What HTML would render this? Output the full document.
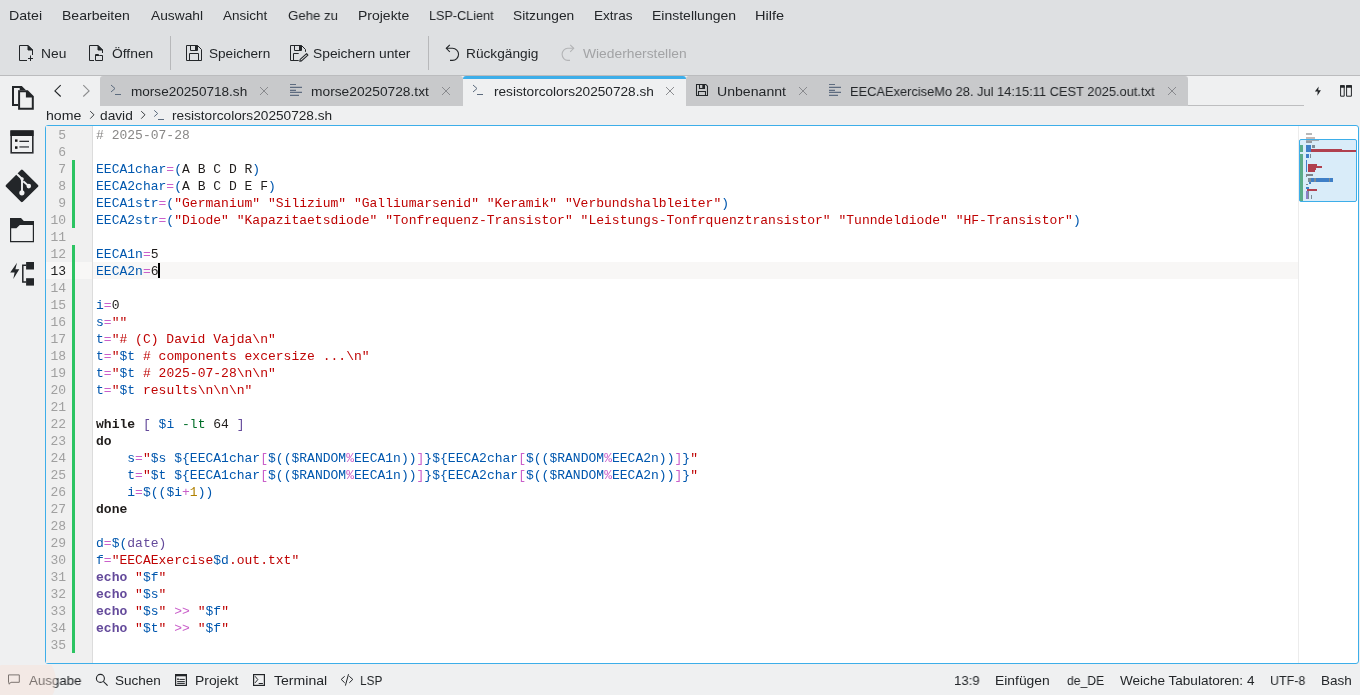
<!DOCTYPE html>
<html><head><meta charset="utf-8"><style>
html,body{margin:0;padding:0;}
body{width:1360px;height:695px;overflow:hidden;background:#eff0f1;position:relative;}
#root{position:absolute;left:0;top:0;width:1360px;height:695px;overflow:hidden;}
.abs{position:absolute;}
.t{will-change:transform;position:absolute;white-space:pre;font-family:"Liberation Sans",sans-serif;font-size:13.5px;line-height:20px;transform-origin:0 0;}
#header{position:absolute;left:0;top:0;width:1360px;height:75px;background:#dee0e2;}
#hline{position:absolute;left:0;top:75px;width:1360px;height:1px;background:#bbbcbe;}
.tsep{position:absolute;top:36px;width:1px;height:34px;background:#b7b8ba;}
.tab{position:absolute;top:76px;height:30px;background:#c8c9cb;border-radius:3px 3px 0 0;}
.atab{position:absolute;top:76px;height:30px;background:#eff0f1;}
.atabline{position:absolute;top:76px;height:3px;background:#3daee9;border-radius:3px 3px 0 0;}
#frame{position:absolute;left:45px;top:125px;width:1312px;height:537px;border:1px solid #3daee9;border-radius:3px;background:#fff;overflow:hidden;}
#gutter{position:absolute;left:46px;top:126px;width:46px;height:537px;background:#f0f0f0;}
#gsep{position:absolute;left:92px;top:126px;width:1px;height:537px;background:#dcdcdc;}
#msep{position:absolute;left:1298px;top:126px;width:1px;height:537px;background:#ececec;}
.curline{position:absolute;left:93px;width:1205px;height:17px;background:#f8f7f6;}
.curgut{position:absolute;left:46px;width:46px;height:17px;background:#f8f7f6;}
.ln{will-change:transform;position:absolute;left:46px;width:20px;padding-top:1px;text-align:right;font-family:"Liberation Mono",monospace;font-size:13px;line-height:17px;height:17px;color:#a0a0a0;}
.ln.cur{color:#1e1e1e;}
.cl{will-change:transform;letter-spacing:0.0136px;position:absolute;left:96px;padding-top:1px;white-space:pre;font-family:"Liberation Mono",monospace;font-size:13px;line-height:17px;height:17px;color:#1f1c1b;}
.gbar{position:absolute;left:72px;width:3px;background:#2cc462;}
.cursor{position:absolute;left:158px;top:263px;width:2px;height:15px;background:#000;}
svg{position:absolute;overflow:visible;}

</style></head><body>
<div id="root">
<div id="header"></div>
<div id="hline"></div>
<div class="tsep" style="left:170px"></div>
<div class="tsep" style="left:428px"></div>
<!-- toolbar icons -->
<svg style="left:18px;top:45px" width="16" height="16" viewBox="0 0 16 16" fill="none" stroke="#232629" stroke-width="1">
 <path d="M9 15.5H1.5V0.5H10L14.5 5V10"/><path d="M10 0.5V5H14.5Z" fill="#232629"/>
 <path d="M12.5 10.5V16M10 13.5H15"/>
</svg>
<svg style="left:88px;top:45px" width="16" height="16" viewBox="0 0 16 16" fill="none" stroke="#232629" stroke-width="1">
 <path d="M6 15.5H1.5V0.5H10L14.5 5V8"/><path d="M10 0.5V5H14.5Z" fill="#232629"/>
 <path d="M7.5 15.5V9.5H10.5L11.5 10.5H14.5V15.5Z"/><path d="M7.5 10.5H11" />
</svg>
<svg style="left:186px;top:45px" width="16" height="16" viewBox="0 0 16 16" fill="none" stroke="#232629" stroke-width="1">
 <path d="M0.5 0.5H11.5L15.5 4.5V15.5H0.5Z"/><path d="M4.5 0.5V5.5H11.5V0.5"/><rect x="9" y="1" width="2" height="4" fill="#232629" stroke="none"/>
 <path d="M3.5 15.5V8.5H12.5V15.5"/>
</svg>
<svg style="left:290px;top:45px" width="19" height="17" viewBox="0 0 19 17" fill="none" stroke="#232629" stroke-width="1">
 <path d="M8.7 15.5H0.5V0.5H11.5L15.5 4.5V6.8"/><path d="M4.5 0.5V5.5H11.5V0.5"/><rect x="9" y="1" width="2" height="4" fill="#232629" stroke="none"/>
 <path d="M3.5 15.5V8.5H8.7"/>
 <path d="M10.2 14.4L16.6 8.7L17.9 10.2L11.5 15.9L9.8 16.3Z" stroke-width="1.1" stroke-linejoin="round"/>
</svg>
<svg style="left:445px;top:45px" width="16" height="16" viewBox="0 0 16 16" fill="none" stroke="#232629" stroke-width="1.1">
 <path d="M4.8 -0.2L1.3 3.3L4.8 6.8"/><path d="M1.3 3.3H7.5A6.05 6.05 0 0 1 7.5 15.4H5"/>
</svg>
<svg style="left:560px;top:45px" width="16" height="16" viewBox="0 0 16 16" fill="none" stroke="#b3b4b6" stroke-width="1.1">
 <path d="M10.2 -0.2L13.7 3.3L10.2 6.8"/><path d="M13.7 3.3H7.8A5.7 6.05 0 0 0 7.8 15.4H10"/>
</svg>
<!-- tab bar -->
<svg style="left:50px;top:84px" width="16" height="16" viewBox="0 0 16 16" fill="none" stroke="#232629" stroke-width="1.1"><path d="M10.7 1.2L4.9 6.9L10.7 12.5"/></svg>
<svg style="left:78px;top:84px" width="16" height="16" viewBox="0 0 16 16" fill="none" stroke="#8b8c8e" stroke-width="1.1"><path d="M5.3 1.2L11.1 6.9L5.3 12.5"/></svg>
<div class="tab" style="left:100px;width:363px"></div>
<div class="atab" style="left:463px;width:223px"></div>
<div class="atabline" style="left:463px;width:223px"></div>
<div class="tab" style="left:686px;width:502px"></div>
<div class="abs" style="left:1188px;top:105px;width:116px;height:1px;background:#bdbec0"></div>
<!-- tab icons -->
<svg style="left:110px;top:84px" width="12" height="12" viewBox="0 0 12 12" fill="none" stroke="#5b6a7d" stroke-width="1"><path d="M1 1L5 4.5L1 8M5 10.5H11"/></svg>
<svg style="left:256px;top:83px" width="16" height="16" viewBox="0 0 16 16" fill="none" stroke="#86878a" stroke-width="0.95"><path d="M4 4L12 12M12 4L4 12"/></svg>
<svg style="left:289px;top:83px" width="14" height="14" viewBox="0 0 14 14" fill="none" stroke="#5e6c80" stroke-width="1.1"><path d="M1 1.5H7M1 4.4H13M1 7.35H7M1 9.4H13M1 12.4H10"/></svg>
<svg style="left:438px;top:83px" width="16" height="16" viewBox="0 0 16 16" fill="none" stroke="#86878a" stroke-width="0.95"><path d="M4 4L12 12M12 4L4 12"/></svg>
<svg style="left:472px;top:84px" width="12" height="12" viewBox="0 0 12 12" fill="none" stroke="#5b6a7d" stroke-width="1"><path d="M1 1L5 4.5L1 8M5 10.5H11"/></svg>
<svg style="left:662px;top:83px" width="16" height="16" viewBox="0 0 16 16" fill="none" stroke="#86878a" stroke-width="0.95"><path d="M4 4L12 12M12 4L4 12"/></svg>
<svg style="left:696px;top:84px" width="12" height="12" viewBox="0 0 12 12" fill="none" stroke="#232629" stroke-width="1.05">
 <path d="M0.5 0.5H9.8L11.5 2.2V11.5H0.5Z"/><path d="M3.5 0.5V4.5H8.5V0.5"/><rect x="6.3" y="0.5" width="2.2" height="4" fill="#232629" stroke="none"/><path d="M2.5 11.5V7.5H9.5V11.5"/>
</svg>
<svg style="left:795px;top:83px" width="16" height="16" viewBox="0 0 16 16" fill="none" stroke="#86878a" stroke-width="0.95"><path d="M4 4L12 12M12 4L4 12"/></svg>
<svg style="left:828px;top:83px" width="14" height="14" viewBox="0 0 14 14" fill="none" stroke="#5e6c80" stroke-width="1.1"><path d="M1 1.5H7M1 4.4H13M1 7.35H7M1 9.4H13M1 12.4H10"/></svg>
<svg style="left:1164px;top:83px" width="16" height="16" viewBox="0 0 16 16" fill="none" stroke="#86878a" stroke-width="0.95"><path d="M4 4L12 12M12 4L4 12"/></svg>
<svg style="left:1312px;top:85px" width="12" height="12" viewBox="0 0 12 12"><path d="M6.7 1.4L2.9 6.5H5.7L5.3 10.7L8.9 5.3H6.2Z" fill="#232629"/></svg>
<svg style="left:1338px;top:84px" width="16" height="14" viewBox="0 0 16 14" fill="none" stroke="#232629" stroke-width="1"><path d="M2.6 1.7H6.2V12.2H2.6ZM8.6 1.7H13.4V12.2H8.6Z"/><path d="M2.1 1.2h4.6v2.5H2.1zM8.1 1.2h5.8v2.5H8.1z" fill="#232629" stroke="none"/></svg>
<!-- breadcrumb -->
<svg style="left:86px;top:109px" width="10" height="14" viewBox="0 0 10 14" fill="none" stroke="#34373a" stroke-width="0.95"><path d="M4.2 2.2L8 5.75L4.2 9.7"/></svg>
<svg style="left:137px;top:109px" width="10" height="14" viewBox="0 0 10 14" fill="none" stroke="#34373a" stroke-width="0.95"><path d="M4.2 2.2L8 5.75L4.2 9.7"/></svg>
<svg style="left:153px;top:108px" width="12" height="14" viewBox="0 0 12 14" fill="none" stroke="#5b6a7d" stroke-width="1"><path d="M1.2 2.3L4.7 5.5L1.2 8.6M5 11.5H11"/></svg>
<!-- editor frame -->
<div id="frame"></div>
<div id="gutter"></div>
<div id="gsep"></div>
<div id="msep"></div>
<!-- sidebar icons -->
<svg style="left:12px;top:86px" width="24" height="26" viewBox="0 0 24 26">
 <path d="M0 0H9.8L14 4.3H6.1V20H0Z" fill="#232629"/>
 <path d="M2 2H7.7V4.3H6.1V18H2Z" fill="#eff0f1"/>
 <path d="M6.1 4.3H15.8L21.8 10.3V23.8H6.1Z" fill="#232629"/>
 <path d="M8.1 6.3H13.9V11.6H19.8V21.8H8.1Z" fill="#eff0f1"/>
</svg>
<svg style="left:10px;top:130px" width="24" height="24" viewBox="0 0 24 24">
 <rect x="0.4" y="0.4" width="23.2" height="23.2" fill="#2b2d30"/>
 <rect x="0.4" y="0.4" width="23.2" height="5.6" fill="#1f2124"/>
 <rect x="2" y="6" width="20" height="16" fill="#eff0f1"/>
 <rect x="5" y="9.4" width="2.5" height="2.4" fill="#111"/><rect x="9.4" y="10.7" width="9.6" height="1.3" fill="#2b2d30"/>
 <rect x="5" y="16.3" width="2.5" height="2.5" fill="#111"/><rect x="9.4" y="16.3" width="9.6" height="1.3" fill="#3b3d40"/>
</svg>
<svg style="left:2px;top:166px" width="40" height="40" viewBox="0 0 40 40">
 <path d="M4.9 19.9L19.9 4.9L35.1 19.9L19.9 34.8Z" fill="#232629" stroke="#232629" stroke-width="2.6" stroke-linejoin="round"/>
 <path d="M14.6 7.8L20.1 13M20 13V26.8M21.2 15.2L26.8 20.1" stroke="#eff0f1" stroke-width="1.9" fill="none"/>
 <circle cx="20.1" cy="13" r="1.7" fill="#eff0f1"/><circle cx="26.8" cy="20.1" r="2.3" fill="#eff0f1"/><circle cx="19.9" cy="26.8" r="2.6" fill="#eff0f1"/>
</svg>
<svg style="left:10px;top:217.75px" width="24" height="25" viewBox="0 0 24 25">
 <path d="M0 0H11L13.8 2.9H24V24.2H0Z" fill="#232629"/>
 <path d="M1.2 10.35H6.4L9.8 7H22.8V23H1.2Z" fill="#eff0f1"/>
</svg>
<svg style="left:9px;top:262px" width="26" height="26" viewBox="0 0 26 26">
 <path d="M8 0.8L1.2 10.6H5.6L4.3 17L10.3 7.2H6.4Z" fill="#232629"/>
 <rect x="17.1" y="0" width="7.9" height="7.5" fill="#232629"/>
 <rect x="17.1" y="16.2" width="7.9" height="7.4" fill="#232629"/>
 <path d="M17.1 3.2H13.8V20H17.1" stroke="#232629" stroke-width="1.5" fill="none"/>
</svg>
<!-- status bar -->
<svg style="left:7px;top:674px" width="14" height="14" viewBox="0 0 14 14" fill="none" stroke="#232629" stroke-width="1"><path d="M1.5 0.9H12.3V8.3H4L2 10.2V8.3H1.5Z"/></svg>
<svg style="left:95px;top:673px" width="14" height="14" viewBox="0 0 14 14" fill="none" stroke="#232629" stroke-width="1.1"><circle cx="5.4" cy="5.4" r="4"/><path d="M8.3 8.3L12.6 12.6"/></svg>
<svg style="left:175px;top:674px" width="12" height="12" viewBox="0 0 12 12" fill="none" stroke="#232629"><rect x="0.6" y="0.6" width="10.8" height="10.8" stroke-width="1.2"/><rect x="0" y="0" width="12" height="2.3" fill="#232629" stroke="none"/><rect x="2.2" y="4.4" width="1.6" height="1.6" fill="#232629" stroke="none"/><path d="M4.4 5.4H9.8M2.2 7.6H9.8M2.2 9.4H9.8" stroke-width="1"/></svg>
<svg style="left:253px;top:674px" width="12" height="12" viewBox="0 0 12 12" fill="none" stroke="#232629"><rect x="0.6" y="0.6" width="10.8" height="10.8" stroke-width="1.2"/><path d="M2 2.2L4.8 5.6L2 8.9M5.7 9.5H9.9" stroke-width="1"/></svg>
<svg style="left:340px;top:673px" width="14" height="14" viewBox="0 0 14 14" fill="none" stroke="#232629" stroke-width="1"><path d="M4.7 3.3L1.2 6.4L4.7 9.8M9.3 3.3L12.8 6.4L9.3 9.8M8.5 1.2L5.4 12.6"/></svg>

<div class="curline" style="top:262px"></div>
<div class="curgut" style="top:262px"></div>
<div class="gbar" style="top:160px;height:68px"></div>
<div class="gbar" style="top:245px;height:408px"></div>
<div class="abs" style="left:1299px;top:139px;width:56px;height:61px;border:1px solid #3daee9;border-radius:2px;background:#d9ecf9"></div>
<div class="abs" style="left:1300px;top:145px;width:3px;height:7px;background:#5aab88"></div>
<div class="abs" style="left:1300px;top:154px;width:3px;height:47px;background:#5aab88"></div>
<div class="abs" style="left:1306.1px;top:133.2px;width:5.70px;height:1.60px;background:#b8b8b8"></div>
<div class="abs" style="left:1306.1px;top:137.1px;width:8.80px;height:1.50px;background:#c6bab6"></div>
<div class="abs" style="left:1306.1px;top:139.6px;width:12.60px;height:1.20px;background:#a4aab0"></div>
<div class="abs" style="left:1306.1px;top:141.0px;width:5.70px;height:1.70px;background:#939aa0"></div>
<div class="abs" style="left:1306.1px;top:145.1px;width:4.70px;height:6.50px;background:#3f7fc7"></div>
<div class="abs" style="left:1312.1px;top:145.1px;width:2.90px;height:3.30px;background:#7e8c96"></div>
<div class="abs" style="left:1310.8px;top:149.0px;width:31.20px;height:1.40px;background:#b0404f"></div>
<div class="abs" style="left:1310.8px;top:150.2px;width:45.10px;height:1.70px;background:#b0404f"></div>
<div class="abs" style="left:1306.1px;top:154.2px;width:3.40px;height:3.70px;background:#3f7fc7"></div>
<div class="abs" style="left:1309.5px;top:154.2px;width:0.70px;height:3.70px;background:#7e8c96"></div>
<div class="abs" style="left:1306.0px;top:160.0px;width:1.00px;height:11.70px;background:#3f7fc7"></div>
<div class="abs" style="left:1308.0px;top:164.2px;width:8.70px;height:3.80px;background:#b0404f"></div>
<div class="abs" style="left:1308.0px;top:168.0px;width:7.80px;height:2.00px;background:#b0404f"></div>
<div class="abs" style="left:1308.0px;top:170.0px;width:6.80px;height:1.70px;background:#b0404f"></div>
<div class="abs" style="left:1316.7px;top:166.2px;width:5.20px;height:1.60px;background:#b0404f"></div>
<div class="abs" style="left:1306.0px;top:174.2px;width:6.80px;height:1.70px;background:#7d858b"></div>
<div class="abs" style="left:1306.0px;top:175.9px;width:1.00px;height:1.60px;background:#7d858b"></div>
<div class="abs" style="left:1308.3px;top:178.1px;width:2.60px;height:3.60px;background:#7e8c96"></div>
<div class="abs" style="left:1310.9px;top:178.1px;width:22.00px;height:3.60px;background:#3f7fc7"></div>
<div class="abs" style="left:1314.1px;top:178.1px;width:1.70px;height:3.60px;background:#7e8c96"></div>
<div class="abs" style="left:1329.0px;top:178.1px;width:1.00px;height:3.60px;background:#7e8c96"></div>
<div class="abs" style="left:1308.6px;top:182.0px;width:2.00px;height:1.60px;background:#3f7fc7"></div>
<div class="abs" style="left:1306.0px;top:184.0px;width:2.00px;height:1.00px;background:#7d858b"></div>
<div class="abs" style="left:1306.0px;top:187.2px;width:3.00px;height:1.90px;background:#3f7fc7"></div>
<div class="abs" style="left:1307.0px;top:189.1px;width:10.00px;height:1.90px;background:#b0404f"></div>
<div class="abs" style="left:1306.0px;top:191.0px;width:2.00px;height:7.90px;background:#8a80c8"></div>
<div class="abs" style="left:1308.0px;top:191.0px;width:1.00px;height:7.90px;background:#7e8c96"></div>
<div class="abs" style="left:1310.9px;top:195.0px;width:1.00px;height:3.90px;background:#7e8c96"></div>
<div class="ln" style="top:126px">5</div>
<div class="cl" style="top:126px"><span style="color:#898887"># 2025-07-28</span></div>
<div class="ln" style="top:143px">6</div>
<div class="cl" style="top:143px"></div>
<div class="ln" style="top:160px">7</div>
<div class="cl" style="top:160px"><span style="color:#0057ae">EECA1char</span><span style="color:#ca60ca">=</span><span style="color:#0057ae">(</span><span style="color:#1f1c1b">A B C D R</span><span style="color:#0057ae">)</span></div>
<div class="ln" style="top:177px">8</div>
<div class="cl" style="top:177px"><span style="color:#0057ae">EECA2char</span><span style="color:#ca60ca">=</span><span style="color:#0057ae">(</span><span style="color:#1f1c1b">A B C D E F</span><span style="color:#0057ae">)</span></div>
<div class="ln" style="top:194px">9</div>
<div class="cl" style="top:194px"><span style="color:#0057ae">EECA1str</span><span style="color:#ca60ca">=</span><span style="color:#0057ae">(</span><span style="color:#bf0303">&quot;Germanium&quot; &quot;Silizium&quot; &quot;Galliumarsenid&quot; &quot;Keramik&quot; &quot;Verbundshalbleiter&quot;</span><span style="color:#0057ae">)</span></div>
<div class="ln" style="top:211px">10</div>
<div class="cl" style="top:211px"><span style="color:#0057ae">EECA2str</span><span style="color:#ca60ca">=</span><span style="color:#0057ae">(</span><span style="color:#bf0303">&quot;Diode&quot; &quot;Kapazitaetsdiode&quot; &quot;Tonfrequenz-Transistor&quot; &quot;Leistungs-Tonfrquenztransistor&quot; &quot;Tunndeldiode&quot; &quot;HF-Transistor&quot;</span><span style="color:#0057ae">)</span></div>
<div class="ln" style="top:228px">11</div>
<div class="cl" style="top:228px"></div>
<div class="ln" style="top:245px">12</div>
<div class="cl" style="top:245px"><span style="color:#0057ae">EECA1n</span><span style="color:#ca60ca">=</span><span style="color:#1f1c1b">5</span></div>
<div class="ln cur" style="top:262px">13</div>
<div class="cl" style="top:262px"><span style="color:#0057ae">EECA2n</span><span style="color:#ca60ca">=</span><span style="color:#1f1c1b">6</span></div>
<div class="ln" style="top:279px">14</div>
<div class="cl" style="top:279px"></div>
<div class="ln" style="top:296px">15</div>
<div class="cl" style="top:296px"><span style="color:#0057ae">i</span><span style="color:#ca60ca">=</span><span style="color:#1f1c1b">0</span></div>
<div class="ln" style="top:313px">16</div>
<div class="cl" style="top:313px"><span style="color:#0057ae">s</span><span style="color:#ca60ca">=</span><span style="color:#bf0303">&quot;&quot;</span></div>
<div class="ln" style="top:330px">17</div>
<div class="cl" style="top:330px"><span style="color:#0057ae">t</span><span style="color:#ca60ca">=</span><span style="color:#bf0303">&quot;# (C) David Vajda\n&quot;</span></div>
<div class="ln" style="top:347px">18</div>
<div class="cl" style="top:347px"><span style="color:#0057ae">t</span><span style="color:#ca60ca">=</span><span style="color:#bf0303">&quot;</span><span style="color:#0057ae">$t</span><span style="color:#bf0303"> # components excersize ...\n&quot;</span></div>
<div class="ln" style="top:364px">19</div>
<div class="cl" style="top:364px"><span style="color:#0057ae">t</span><span style="color:#ca60ca">=</span><span style="color:#bf0303">&quot;</span><span style="color:#0057ae">$t</span><span style="color:#bf0303"> # 2025-07-28\n\n&quot;</span></div>
<div class="ln" style="top:381px">20</div>
<div class="cl" style="top:381px"><span style="color:#0057ae">t</span><span style="color:#ca60ca">=</span><span style="color:#bf0303">&quot;</span><span style="color:#0057ae">$t</span><span style="color:#bf0303"> results\n\n\n&quot;</span></div>
<div class="ln" style="top:398px">21</div>
<div class="cl" style="top:398px"></div>
<div class="ln" style="top:415px">22</div>
<div class="cl" style="top:415px"><span style="color:#1f1c1b;font-weight:bold">while</span><span style="color:#1f1c1b"> </span><span style="color:#644a9b">[</span><span style="color:#1f1c1b"> </span><span style="color:#0057ae">$i</span><span style="color:#1f1c1b"> </span><span style="color:#006e28">-lt</span><span style="color:#1f1c1b"> 64 </span><span style="color:#644a9b">]</span></div>
<div class="ln" style="top:432px">23</div>
<div class="cl" style="top:432px"><span style="color:#1f1c1b;font-weight:bold">do</span></div>
<div class="ln" style="top:449px">24</div>
<div class="cl" style="top:449px"><span style="color:#1f1c1b">    </span><span style="color:#0057ae">s</span><span style="color:#ca60ca">=</span><span style="color:#bf0303">&quot;</span><span style="color:#0057ae">$s</span><span style="color:#bf0303"> </span><span style="color:#0057ae">${EECA1char</span><span style="color:#ca60ca">[</span><span style="color:#0057ae">$(($RANDOM</span><span style="color:#ca60ca">%</span><span style="color:#0057ae">EECA1n))</span><span style="color:#ca60ca">]</span><span style="color:#0057ae">}</span><span style="color:#0057ae">${EECA2char</span><span style="color:#ca60ca">[</span><span style="color:#0057ae">$(($RANDOM</span><span style="color:#ca60ca">%</span><span style="color:#0057ae">EECA2n))</span><span style="color:#ca60ca">]</span><span style="color:#0057ae">}</span><span style="color:#bf0303">&quot;</span></div>
<div class="ln" style="top:466px">25</div>
<div class="cl" style="top:466px"><span style="color:#1f1c1b">    </span><span style="color:#0057ae">t</span><span style="color:#ca60ca">=</span><span style="color:#bf0303">&quot;</span><span style="color:#0057ae">$t</span><span style="color:#bf0303"> </span><span style="color:#0057ae">${EECA1char</span><span style="color:#ca60ca">[</span><span style="color:#0057ae">$(($RANDOM</span><span style="color:#ca60ca">%</span><span style="color:#0057ae">EECA1n))</span><span style="color:#ca60ca">]</span><span style="color:#0057ae">}</span><span style="color:#0057ae">${EECA2char</span><span style="color:#ca60ca">[</span><span style="color:#0057ae">$(($RANDOM</span><span style="color:#ca60ca">%</span><span style="color:#0057ae">EECA2n))</span><span style="color:#ca60ca">]</span><span style="color:#0057ae">}</span><span style="color:#bf0303">&quot;</span></div>
<div class="ln" style="top:483px">26</div>
<div class="cl" style="top:483px"><span style="color:#1f1c1b">    </span><span style="color:#0057ae">i</span><span style="color:#ca60ca">=</span><span style="color:#0057ae">$((</span><span style="color:#0057ae">$i</span><span style="color:#ca60ca">+</span><span style="color:#b08000">1</span><span style="color:#0057ae">))</span></div>
<div class="ln" style="top:500px">27</div>
<div class="cl" style="top:500px"><span style="color:#1f1c1b;font-weight:bold">done</span></div>
<div class="ln" style="top:517px">28</div>
<div class="cl" style="top:517px"></div>
<div class="ln" style="top:534px">29</div>
<div class="cl" style="top:534px"><span style="color:#0057ae">d</span><span style="color:#ca60ca">=</span><span style="color:#0057ae">$(</span><span style="color:#644a9b">date</span><span style="color:#644a9b">)</span></div>
<div class="ln" style="top:551px">30</div>
<div class="cl" style="top:551px"><span style="color:#0057ae">f</span><span style="color:#ca60ca">=</span><span style="color:#bf0303">&quot;EECAExercise</span><span style="color:#0057ae">$d</span><span style="color:#bf0303">.out.txt&quot;</span></div>
<div class="ln" style="top:568px">31</div>
<div class="cl" style="top:568px"><span style="color:#644a9b;font-weight:bold">echo</span><span style="color:#1f1c1b"> </span><span style="color:#bf0303">&quot;</span><span style="color:#0057ae">$f</span><span style="color:#bf0303">&quot;</span></div>
<div class="ln" style="top:585px">32</div>
<div class="cl" style="top:585px"><span style="color:#644a9b;font-weight:bold">echo</span><span style="color:#1f1c1b"> </span><span style="color:#bf0303">&quot;</span><span style="color:#0057ae">$s</span><span style="color:#bf0303">&quot;</span></div>
<div class="ln" style="top:602px">33</div>
<div class="cl" style="top:602px"><span style="color:#644a9b;font-weight:bold">echo</span><span style="color:#1f1c1b"> </span><span style="color:#bf0303">&quot;</span><span style="color:#0057ae">$s</span><span style="color:#bf0303">&quot;</span><span style="color:#1f1c1b"> </span><span style="color:#ca60ca">&gt;&gt;</span><span style="color:#1f1c1b"> </span><span style="color:#bf0303">&quot;</span><span style="color:#0057ae">$f</span><span style="color:#bf0303">&quot;</span></div>
<div class="ln" style="top:619px">34</div>
<div class="cl" style="top:619px"><span style="color:#644a9b;font-weight:bold">echo</span><span style="color:#1f1c1b"> </span><span style="color:#bf0303">&quot;</span><span style="color:#0057ae">$t</span><span style="color:#bf0303">&quot;</span><span style="color:#1f1c1b"> </span><span style="color:#ca60ca">&gt;&gt;</span><span style="color:#1f1c1b"> </span><span style="color:#bf0303">&quot;</span><span style="color:#0057ae">$f</span><span style="color:#bf0303">&quot;</span></div>
<div class="ln" style="top:636px">35</div>
<div class="cl" style="top:636px"></div>
<div class="cursor"></div>
<span class="t" style="left:9.45px;top:6.00px;color:#232629;transform:scaleX(1.0500)">Datei</span>
<span class="t" style="left:62.46px;top:6.00px;color:#232629;transform:scaleX(1.0391)">Bearbeiten</span>
<span class="t" style="left:151.00px;top:6.00px;color:#232629;transform:scaleX(1.0200)">Auswahl</span>
<span class="t" style="left:223.00px;top:6.00px;color:#232629;transform:scaleX(1.0000)">Ansicht</span>
<span class="t" style="left:288.00px;top:6.00px;color:#232629;transform:scaleX(0.9800)">Gehe zu</span>
<span class="t" style="left:357.56px;top:6.00px;color:#232629;transform:scaleX(1.0354)">Projekte</span>
<span class="t" style="left:428.66px;top:6.00px;color:#232629;transform:scaleX(0.9353)">LSP-CLient</span>
<span class="t" style="left:513.18px;top:6.00px;color:#232629;transform:scaleX(1.0203)">Sitzungen</span>
<span class="t" style="left:594.29px;top:6.00px;color:#232629;transform:scaleX(1.0054)">Extras</span>
<span class="t" style="left:651.76px;top:6.00px;color:#232629;transform:scaleX(1.0363)">Einstellungen</span>
<span class="t" style="left:754.92px;top:6.00px;color:#232629;transform:scaleX(1.0769)">Hilfe</span>
<span class="t" style="left:40.68px;top:44.20px;color:#232629;transform:scaleX(1.0217)">Neu</span>
<span class="t" style="left:111.60px;top:44.20px;color:#232629;transform:scaleX(1.0250)">Öffnen</span>
<span class="t" style="left:208.59px;top:44.20px;color:#232629;transform:scaleX(1.0068)">Speichern</span>
<span class="t" style="left:313.38px;top:44.20px;color:#232629;transform:scaleX(1.0223)">Speichern unter</span>
<span class="t" style="left:466.39px;top:44.20px;color:#232629;transform:scaleX(1.0143)">Rückgängig</span>
<span class="t" style="left:583.30px;top:44.20px;color:#a2a3a5;transform:scaleX(1.0228)">Wiederherstellen</span>
<span class="t" style="left:131.39px;top:81.80px;color:#232629;transform:scaleX(1.0053)">morse20250718.sh</span>
<span class="t" style="left:311.38px;top:81.80px;color:#232629;transform:scaleX(1.0200)">morse20250728.txt</span>
<span class="t" style="left:493.69px;top:81.80px;color:#232629;transform:scaleX(1.0096)">resistorcolors20250728.sh</span>
<span class="t" style="left:717.46px;top:81.80px;color:#232629;transform:scaleX(1.0446)">Unbenannt</span>
<span class="t" style="left:850.45px;top:81.80px;color:#232629;transform:scaleX(0.9517)">EECAExerciseMo 28. Jul 14:15:11 CEST 2025.out.txt</span>
<span class="t" style="left:46.25px;top:106.30px;color:#232629;transform:scaleX(1.0485)">home</span>
<span class="t" style="left:100.20px;top:106.30px;color:#232629;transform:scaleX(1.0156)">david</span>
<span class="t" style="left:172.49px;top:106.30px;color:#232629;transform:scaleX(1.0115)">resistorcolors20250728.sh</span>
<span class="t" style="left:28.70px;top:670.80px;color:#232629;transform:scaleX(0.9849)">Ausgabe</span>
<span class="t" style="left:115.20px;top:670.80px;color:#232629;transform:scaleX(1.0023)">Suchen</span>
<span class="t" style="left:194.67px;top:670.80px;color:#232629;transform:scaleX(1.0293)">Projekt</span>
<span class="t" style="left:273.50px;top:670.80px;color:#232629;transform:scaleX(1.0420)">Terminal</span>
<span class="t" style="left:360.32px;top:670.80px;color:#232629;transform:scaleX(0.8792)">LSP</span>
<span class="t" style="left:953.92px;top:670.80px;color:#232629;transform:scaleX(0.9760)">13:9</span>
<span class="t" style="left:995.27px;top:670.80px;color:#232629;transform:scaleX(1.0269)">Einfügen</span>
<span class="t" style="left:1066.50px;top:670.80px;color:#232629;transform:scaleX(0.9000)">de_DE</span>
<span class="t" style="left:1120.10px;top:670.80px;color:#232629;transform:scaleX(1.0045)">Weiche Tabulatoren: 4</span>
<span class="t" style="left:1270.28px;top:670.80px;color:#232629;transform:scaleX(0.9243)">UTF-8</span>
<span class="t" style="left:1321.30px;top:670.80px;color:#232629;transform:scaleX(0.9966)">Bash</span>
<div class="abs" style="left:0;top:665px;width:100px;height:30px;overflow:hidden"><div class="abs" style="left:-4px;top:-14px;width:60px;height:60px;border-radius:50%;background:rgba(248,223,212,0.42)"></div></div>
</div>
</body></html>
